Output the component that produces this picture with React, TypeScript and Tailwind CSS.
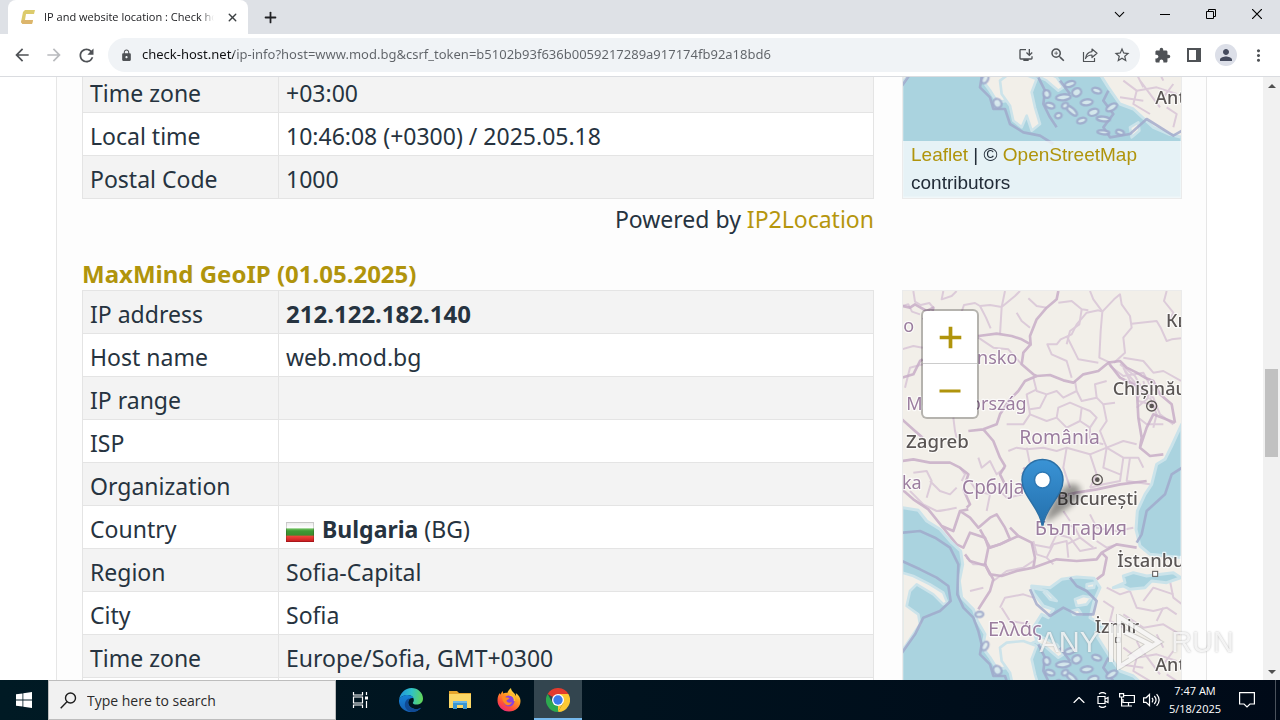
import type { ReactNode } from "react";
import { ChevronDown, ChevronUp, Minus, Plus, X } from "lucide-react";
import {
  MdArrowBack,
  MdArrowForward,
  MdExtension,
  MdLock,
  MdMoreVert,
  MdOutlineInstallDesktop,
  MdPerson,
  MdRefresh,
  MdStarBorder,
  MdZoomIn,
} from "react-icons/md";

type Row = { label: string; value: ReactNode };

function Flag() {
  return (
    <svg viewBox="0 0 28 20" className="mr-2 inline-block h-5 w-7 align-[-4px]" role="img" aria-label="Bulgarian flag">
      <defs>
        <linearGradient id="flag-shade" x1="0" y1="0" x2="0" y2="1">
          <stop offset="0" stopColor="#e8e8e8" />
          <stop offset=".3" stopColor="#fff" />
          <stop offset=".34" stopColor="#6cbf5c" />
          <stop offset=".45" stopColor="#3f9a35" />
          <stop offset=".66" stopColor="#3c8c2e" />
          <stop offset=".7" stopColor="#f0483c" />
          <stop offset="1" stopColor="#c4161c" />
        </linearGradient>
      </defs>
      <rect width="28" height="20" fill="url(#flag-shade)" />
      <rect x=".5" y=".5" width="27" height="19" fill="none" stroke="#000" strokeOpacity=".15" />
    </svg>
  );
}

const ip2location: Row[] = [
  { label: "Time zone", value: "+03:00" },
  { label: "Local time", value: "10:46:08 (+0300) / 2025.05.18" },
  { label: "Postal Code", value: "1000" },
];

const maxmind: Row[] = [
  { label: "IP address", value: <strong className="text-[24px]">212.122.182.140</strong> },
  { label: "Host name", value: "web.mod.bg" },
  { label: "IP range", value: "" },
  { label: "ISP", value: "" },
  { label: "Organization", value: "" },
  {
    label: "Country",
    value: (
      <>
        <Flag />
        <strong>Bulgaria</strong> (BG)
      </>
    ),
  },
  { label: "Region", value: "Sofia-Capital" },
  { label: "City", value: "Sofia" },
  { label: "Time zone", value: "Europe/Sofia, GMT+0300" },
  { label: "Local time", value: "" },
  { label: "Postal Code", value: "" },
];

function InfoTable({ rows }: { rows: Row[] }) {
  return (
    <table className="w-full table-fixed border-collapse border border-[#e4e4e4]">
      <colgroup>
        <col className="w-49" />
        <col />
      </colgroup>
      <tbody>
        {rows.map((row) => (
          <tr key={row.label} className="h-[43px] odd:bg-[#f3f3f3] even:bg-white">
            <th scope="row" className="border border-[#e4e4e4] px-[7px] pt-1 text-left font-normal">
              {row.label}
            </th>
            <td className="border border-[#e4e4e4] px-[7px] pt-1">{row.value}</td>
          </tr>
        ))}
      </tbody>
    </table>
  );
}

const provinceLines = [
  "M70 30 75 62 92 72 118 66 130 80 M36 75 55 70 66 92 90 100 M160 30 155 55 185 45 200 30",
  "M215 92 222 72 255 66 270 75 300 72 335 78 M270 75 288 110 302 142 M335 78 330 160 M345 30 335 78 375 45 390 30",
  "M415 52 440 75 470 80 M420 140 395 120 380 95 M505 65 545 60 575 85 595 88 M575 85 568 130 540 150 530 190 M600 30 610 55 637 92",
  "M637 92 625 88 590 95 560 130 545 160 512 175 500 190 472 190 485 220 530 240 545 290 M637 92 632 150 628 230 660 245",
  "M637 92 672 55 690 40 695 70 720 105 725 140 700 170 705 215 672 245 M725 128 800 120 812 140 830 180 845 175 873 172",
  "M830 30 822 60 850 95 835 125 M530 165 555 215 565 235 625 245 M700 230 760 240 790 275 820 270 873 300",
  "M265 170 310 200 355 205 395 250 M36 205 70 195 98 200 M45 320 60 260 98 250 M190 410 195 450 200 470",
  "M430 290 440 330 470 340 500 330 520 350 560 330 555 300 M470 340 450 380 420 385 M560 330 575 360 620 350 640 370 675 365",
  "M440 325 410 340 420 400 470 420 500 410 505 380 540 365 575 380 570 420 530 440 500 410 M575 380 600 390 620 410 600 440 570 420",
  "M620 350 615 310 650 300 M640 370 650 420 630 450 650 500 700 480 740 490 M600 440 600 480 640 490 M420 400 400 430 350 430",
  "M410 500 420 550 395 580 M355 510 380 500 410 505 460 500 500 510 530 500 600 520 620 580 600 620 M530 500 520 560 540 620",
  "M600 520 650 500 700 530 690 600 640 610 600 620 M650 500 640 560 690 580 M700 530 745 530 760 560 M720 530 710 600 780 610",
  "M700 260 720 300 760 320 745 350 M660 255 700 285 760 275 790 330 M780 350 800 400 790 440 M745 410 770 430 820 430",
  "M690 250 735 285 760 330 790 350 810 400 850 430 M705 270 740 310 745 360 780 370 800 380 M760 300 775 350 740 380",
  "M265 530 275 560 300 540 320 580 345 560 M215 600 225 580 210 560 M70 575 110 570 125 600 110 650 M120 600 150 630 180 640 200 620",
  "M240 600 260 630 300 640 320 620 350 650 400 640 M60 630 100 670 140 690 180 685 M150 690 200 680 M300 640 290 690",
  "M430 780 440 820 470 830 490 790 530 780 535 830 M530 790 570 770 610 800 M570 770 555 740 530 730 M620 780 650 800 680 790",
  "M425 790 480 800 500 760 540 770 570 810 620 800 M470 830 490 850 M600 700 620 740 680 750 730 740 M520 690 540 720",
  "M230 830 250 850 290 850 M240 930 280 920 M310 900 350 870 400 860 430 840 M330 980 345 950 400 940 430 950 M335 980 360 1020 420 1030",
  "M650 920 690 940 720 930 M720 930 740 980 790 990 830 980 860 1000 M760 960 790 920 850 940 M700 1000 760 1040 820 1030 870 1060",
  "M700 1100 740 1130 800 1120 860 1140 M740 1080 760 1120 M800 1060 820 1100 M690 1150 760 1160 M750 1100 810 1180 M820 1150 850 1110",
  "M640 960 670 980 660 1020 700 1040 M840 900 850 950 876 970 M820 980 800 1020 M740 1130 730 1170 780 1200 M830 1180 860 1200 850 1240",
];

const countryLines = [
  "M36 75 60 80 75 70 110 90 130 80 125 105 98 115 M36 290 70 280 90 240 98 235",
  "M505 30 500 55 470 80 440 115 420 165 422 190 395 175 365 165 320 158 265 165",
  "M422 190 400 215 395 250 430 280 440 285 480 282 520 298 550 305 580 280 625 270 655 245 690 240 710 260 740 275 765 290 790 300 810 340 845 370 855 425",
  "M440 285 405 300 385 330 360 355 330 400 320 430 280 445 235 450 M280 445 310 480 330 530 345 555 330 580 345 610",
  "M36 415 75 450 98 470 M36 540 70 535 120 545 180 545 210 560 235 580 220 625 240 670 230 680",
  "M400 560 430 590 440 630 500 650 560 635 620 625 690 610 770 600",
  "M655 245 690 290 740 315 745 410 755 470 750 500 780 525 820 520 M750 500 770 440 790 400 855 425",
  "M36 625 70 655 115 685 155 735 190 750 210 690 235 685 M210 690 240 710 265 740 300 710 320 700 345 740 360 775 330 790 300 800 270 745",
  "M155 735 200 790 220 800 240 755 285 770 295 800 285 850 310 895 300 930 265 985 M225 820 240 840 290 855",
  "M295 800 330 790 385 765 425 785 435 830 430 860 380 870 335 885 300 880 285 850 M360 740 385 765",
  "M430 860 500 835 560 840 620 835 635 815 650 830 640 880 620 895 M635 815 680 790 740 800",
];

const seaShapes = [
  "M36 680 85 688 110 720 150 745 185 785 212 810 218 850 208 900 215 950 250 985 262 1020 285 1060 278 1100 300 1130 322 1165 350 1160 375 1110 440 1080 430 1040 455 1000 475 1010 490 985 460 975 430 935 425 915 480 920 515 895 560 888 612 892 630 920 612 960 600 1010 640 1035 620 1065 655 1120 690 1170 730 1185 790 1240 835 1260 875 1270 875 1452 36 1452Z",
  "M875 430 845 495 825 535 800 550 785 610 765 640 742 690 738 745 750 795 780 820 830 825 875 830Z",
  "M670 920 705 905 700 885 730 875 770 885 850 875 872 890 830 905 785 900 765 920 720 925 700 915Z",
];

const landShapes = [
  "M36 875 70 885 120 910 160 935 172 965 160 970 130 940 80 910 60 930 50 975 85 1000 90 1030 60 1075 36 1110Z",
  "M330 1100 350 1085 400 1080 440 1095 425 1135 435 1180 450 1230 425 1250 410 1205 395 1240 370 1220 360 1175 335 1140Z",
  "M440 1060 500 1090 520 1120 505 1130 470 1100 440 1085Z",
  "M425 920 470 930 500 960 480 955 455 925Z",
  "M555 955 580 945 605 950 590 970 560 975Z",
  "M590 910 615 905 612 920 590 922Z",
  "M545 990 565 985 575 1000 550 1002Z",
  "M720 1240 745 1225 748 1250 725 1270Z",
];

const islands = [
  [520, 1150, 22, 9], [560, 1135, 14, 12], [590, 1165, 18, 9], [545, 1190, 20, 8], [610, 1195, 16, 10],
  [480, 1175, 14, 8], [640, 1215, 20, 7], [575, 1220, 14, 8], [665, 1180, 18, 9], [505, 1205, 10, 8],
  [540, 1110, 16, 8], [620, 1130, 14, 8], [470, 1140, 10, 12], [640, 1255, 18, 6], [690, 1255, 12, 7],
  [322, 1168, 12, 14], [268, 1000, 12, 8], [285, 1095, 9, 14], [525, 1175, 10, 8],
];

const mapLabels = [
  { x: 40, y: 152, text: "o", size: 54, country: true },
  { x: 382, y: 250, text: "Slovensko", size: 54, country: true, end: true },
  { x: 410, y: 386, text: "Magyarország", size: 54, country: true, end: true },
  { x: 388, y: 490, text: "România", size: 58, country: true },
  { x: 36, y: 624, text: "ka", size: 54, country: true },
  { x: 216, y: 640, text: "Србија", size: 57, country: true },
  { x: 434, y: 762, text: "България", size: 60, country: true },
  { x: 294, y: 1066, text: "Ελλάς", size: 60, country: true },
  { x: 828, y: 138, text: "Київ", size: 54 },
  { x: 668, y: 343, text: "Chișinău", size: 54 },
  { x: 48, y: 502, text: "Zagreb", size: 56 },
  { x: 500, y: 673, text: "București", size: 54 },
  { x: 682, y: 857, text: "İstanbul", size: 55 },
  { x: 614, y: 1057, text: "İzmir", size: 54 },
  { x: 796, y: 1171, text: "Antalya", size: 54 },
];

function BalkanMap() {
  return (
    <svg viewBox="36 30 840 1422" className="block h-[474px] w-full shrink-0" preserveAspectRatio="xMidYMid slice" role="img" aria-label="Map of the Balkans">
      <rect x="0" y="0" width="960" height="1500" fill="#f2efe9" />
      <g fill="none" stroke="#dccbd9" strokeWidth="6" strokeLinejoin="round">
        {provinceLines.map((d) => (
          <path key={d} d={d} />
        ))}
      </g>
      <g fill="none" stroke="#c8aec8" strokeWidth="8" strokeLinejoin="round" opacity=".85">
        {countryLines.map((d) => (
          <path key={d} d={d} />
        ))}
      </g>
      <g fill="#aad3df" stroke="#cbe3ea" strokeWidth="9" strokeLinejoin="round">
        {seaShapes.map((d) => (
          <path key={d} d={d} />
        ))}
      </g>
      <g fill="#f2efe9" stroke="#cce3ea" strokeWidth="8" strokeLinejoin="round">
        {landShapes.map((d) => (
          <path key={d} d={d} />
        ))}
      </g>
      <g fill="none" stroke="#a0a8cb" strokeWidth="8" strokeLinejoin="round" opacity=".8">
        <path d="M36 755 90 750 135 770 180 800 205 850 202 940 220 980 250 1010 265 1050 275 1090 270 1120 300 1150 310 1185 345 1185 360 1230 400 1255 450 1265 490 1290" />
        <path d="M36 840 90 865 140 890 175 915 182 960 150 990 100 1010 75 1060 36 1115" />
        <path d="M420 925 440 970 480 1005 520 980 560 1000 610 1000 620 960 590 930 560 915 540 890" />
        <path d="M876 560 845 580 825 640 770 690 755 760 740 785" />
        <path d="M445 1090 465 1130 460 1170 480 1210 500 1240 M510 1100 540 1140 M655 1130 640 1160 670 1200 640 1240 660 1270 720 1260 770 1215 850 1265 876 1250" />
      </g>
      <g fill="#dcebef" stroke="#9fa9cb" strokeWidth="7" opacity=".85">
        {islands.map(([cx, cy, rx, ry]) => (
          <ellipse key={`${cx}-${cy}`} cx={cx} cy={cy} rx={rx} ry={ry} transform={`rotate(${(cx % 7) * 12 - 30} ${cx} ${cy})`} />
        ))}
      </g>
      <g fontFamily="'Noto Sans', sans-serif" stroke="#fff" strokeOpacity=".7" strokeWidth="7" strokeLinejoin="round" paintOrder="stroke">
        {mapLabels.map((label) => (
          <text
            key={label.text}
            x={label.x}
            y={label.y}
            textAnchor={label.end ? "end" : "start"}
            fontSize={label.size}
            fontWeight={label.country ? 400 : 500}
            fill={label.country ? "#9b7d9f" : "#5b5655"}
          >
            {label.text}
          </text>
        ))}
      </g>
      <g fill="none" stroke="#5a5554" strokeWidth="4">
        <circle cx="785" cy="375" r="15" />
        <circle cx="622" cy="596" r="15" />
        <circle cx="785" cy="375" r="5" fill="#5a5554" />
        <circle cx="622" cy="596" r="5" fill="#5a5554" />
        <rect x="788" y="871" width="15" height="15" fill="#fff" strokeWidth="3" />
        <rect x="677" y="1070" width="14" height="14" fill="#fff" strokeWidth="3" />
      </g>
    </svg>
  );
}

function Marker() {
  return (
    <svg viewBox="0 0 72 70" className="absolute top-[167px] left-[118px] h-[70px] w-[72px]" role="img" aria-label="Server location">
      <defs>
        <linearGradient id="pin-fill" x1="0" y1="0" x2="0" y2="1">
          <stop offset="0" stopColor="#3a93d5" />
          <stop offset="1" stopColor="#2470ad" />
        </linearGradient>
        <filter id="pin-shadow">
          <feGaussianBlur stdDeviation="3" />
        </filter>
      </defs>
      <path d="M23 66C28 50 34 34 47 27c10-4 16 4 10 13C50 50 34 58 23 66Z" fill="#000" opacity=".4" filter="url(#pin-shadow)" />
      <path d="M21 67C19 50 1 38 1 22a20.500 20.500 0 0 1 41 0c0 16-18 28-20 45Z" fill="url(#pin-fill)" stroke="#2b6fa5" strokeWidth="1.500" />
      <circle cx="21.500" cy="22" r="8" fill="#fff" stroke="#2d78b4" strokeWidth="1.500" />
    </svg>
  );
}

function TabStrip() {
  return (
    <header className="flex h-[34px] shrink-0 bg-[#dee1e6] pl-2 text-[#202124]">
      <div className="flex w-60 items-center rounded-t-lg bg-white pr-[6px] pl-3">
        <svg viewBox="0 0 16 16" className="mr-2 h-4 w-4 shrink-0" aria-hidden="true">
          <path d="M5 1h10l-1 4H6L5 11h8l-1 4H2.500L1 13 3 3Z" fill="#dccb6c" />
          <path d="M2 11h11l-1 4H2.500L1 13Z" fill="#dcb56c" />
        </svg>
        <span className="w-[170px] overflow-hidden text-[11px] whitespace-nowrap [mask-image:linear-gradient(to_right,black_92%,transparent)]">
          IP and website location : Check host
        </span>
        <button type="button" aria-label="Close tab" className="ml-2 flex h-5 w-5 items-center justify-center text-[#3c4043]">
          <X size={13} strokeWidth={2.5} />
        </button>
      </div>
      <button type="button" aria-label="New tab" className="ml-2 flex w-7 items-center justify-center">
        <Plus size={17} strokeWidth={2.5} />
      </button>
      <div className="ml-auto flex pb-[6px] text-black">
        <button type="button" aria-label="Search tabs" className="flex w-[46px] items-center justify-center">
          <ChevronDown size={17} strokeWidth={1.5} />
        </button>
        <button type="button" aria-label="Minimize" className="flex w-[46px] items-center justify-center">
          <svg viewBox="0 0 10 10" className="h-[10px] w-[10px]"><path d="M0 5.500h10" stroke="currentColor" /></svg>
        </button>
        <button type="button" aria-label="Restore" className="flex w-[46px] items-center justify-center">
          <svg viewBox="0 0 10 10" className="h-[10px] w-[10px]" fill="none" stroke="currentColor">
            <path d="M.5 2.500h7v7h-7zM2.500 2.500v-2h7v7h-2" />
          </svg>
        </button>
        <button type="button" aria-label="Close window" className="flex w-[46px] items-center justify-center">
          <svg viewBox="0 0 10 10" className="h-[10px] w-[10px]"><path d="M0 0l10 10M10 0 0 10" stroke="currentColor" strokeWidth="1.200" /></svg>
        </button>
      </div>
    </header>
  );
}

function ToolButton({ label, children }: { label: string; children: ReactNode }) {
  return (
    <button type="button" aria-label={label} className="flex h-8 w-8 shrink-0 items-center justify-center">
      {children}
    </button>
  );
}

function Toolbar() {
  return (
    <nav className="flex h-[43px] shrink-0 items-center border-b border-[#dadce0] bg-white px-[6px] text-[#4f5256]">
      <ToolButton label="Back"><MdArrowBack size={20} /></ToolButton>
      <ToolButton label="Forward"><MdArrowForward size={20} className="text-[#b9bbbe]" /></ToolButton>
      <ToolButton label="Reload"><MdRefresh size={21} /></ToolButton>
      <div className="mx-[6px] flex h-[34px] flex-1 items-center rounded-full bg-[#f0f3f6] pr-[2px] pl-3">
        <MdLock size={13} className="mr-[9px] shrink-0" />
        <input
          aria-label="Address"
          readOnly
          value="check-host.net/ip-info?host=www.mod.bg&csrf_token=b5102b93f636b0059217289a917174fb92a18bd6"
          className="min-w-0 flex-1 bg-linear-to-r from-[#111214] from-[92px] to-[#5f6368] to-[92px] bg-clip-text font-['Noto_Sans',sans-serif] text-[13px] text-transparent outline-none"
        />
        <ToolButton label="Install"><MdOutlineInstallDesktop size={16} /></ToolButton>
        <ToolButton label="Zoom"><MdZoomIn size={18} /></ToolButton>
        <ToolButton label="Share">
          <svg viewBox="0 0 16 16" className="h-4 w-4" fill="none" stroke="currentColor" strokeWidth="1.200" strokeLinejoin="round">
            <path d="M1.500 5v9.500h11V11M10 2l5 4.300-5 4.200V8C7 8 5 9 3.500 11.500 4 7.500 6.500 5 10 4.600Z" />
          </svg>
        </ToolButton>
        <ToolButton label="Bookmark"><MdStarBorder size={18} /></ToolButton>
      </div>
      <ToolButton label="Extensions"><MdExtension size={17} /></ToolButton>
      <ToolButton label="Side panel">
        <svg viewBox="0 0 14 14" className="h-[14px] w-[14px]" fill="currentColor">
          <path fillRule="evenodd" d="M0 0h14v14H0ZM2 2v10h7V2Z" />
        </svg>
      </ToolButton>
      <ToolButton label="Profile">
        <span className="flex h-[22px] w-[22px] items-center justify-center rounded-full bg-[#dcdfe8] text-[#454b5e]">
          <MdPerson size={18} />
        </span>
      </ToolButton>
      <ToolButton label="Menu"><MdMoreVert size={19} /></ToolButton>
    </nav>
  );
}

function Content() {
  return (
    <main className="min-w-0 flex-1 overflow-hidden bg-white px-14 font-['Noto_Sans',sans-serif] text-[23px] leading-[32px] text-[#263340]">
      <div className="-mt-2 border-x border-[#e6e6e6] bg-[#fdfdfd] pr-6 pl-[25px]">
        <section className="flex gap-7">
          <div className="min-w-0 flex-1">
            <InfoTable rows={ip2location} />
          </div>
          <div className="relative w-[280px] shrink-0 overflow-hidden border border-[#ebebeb]">
            <div className="absolute inset-x-0 bottom-0">
              <BalkanMap />
            </div>
            <p className="absolute inset-x-0 bottom-0 bg-white/70 px-2 pb-px font-['Liberation_Sans',sans-serif] text-[19px] leading-[28px] text-[#222c38]">
              <a href="#leaflet" className="text-[#b0940c]">Leaflet</a> | © <a href="#osm" className="text-[#b0940c]">OpenStreetMap</a> contributors
            </p>
          </div>
        </section>
        <section className="flex gap-7">
          <div className="min-w-0 flex-1">
            <p className="pt-1 text-right">
              Powered by <a href="#ip2location" className="text-[#b5960d]">IP2Location</a>
            </p>
            <h2 className="pt-[23px] text-[24px] leading-[32px] font-bold text-[#b0940c]">MaxMind GeoIP (01.05.2025)</h2>
            <InfoTable rows={maxmind} />
          </div>
          <div className="w-[280px] shrink-0 pt-[91px]">
            <div className="relative h-[474px] overflow-hidden border border-[#ebebeb]">
              <BalkanMap />
              <Marker />
              <div className="absolute top-[18px] left-[18px] flex w-[58px] flex-col overflow-hidden rounded-md border-2 border-black/25 bg-white bg-clip-padding text-[#b0940c]">
                <button type="button" aria-label="Zoom in" className="flex h-[53px] items-center justify-center border-b border-[#ccc]">
                  <Plus size={37} strokeWidth={2.4} strokeLinecap="butt" />
                </button>
                <button type="button" aria-label="Zoom out" className="flex h-[53px] items-center justify-center">
                  <Minus size={36} strokeWidth={2} strokeLinecap="butt" />
                </button>
              </div>
            </div>
          </div>
        </section>
      </div>
    </main>
  );
}

function Scrollbar() {
  return (
    <div className="flex w-[17px] shrink-0 flex-col items-center bg-[#f1f1f1] text-[#505050]">
      <button type="button" aria-label="Scroll up" className="flex h-[17px] items-center">
        <svg viewBox="0 0 8 4" className="h-1 w-2" fill="currentColor"><path d="M0 4 4 0l4 4Z" /></svg>
      </button>
      <span className="grow-[275]" />
      <span className="h-[88px] w-[13px] bg-[#c1c1c1]" />
      <span className="grow-[206]" />
      <button type="button" aria-label="Scroll down" className="flex h-[17px] items-center">
        <svg viewBox="0 0 8 4" className="h-1 w-2" fill="currentColor"><path d="M0 0h8L4 4Z" /></svg>
      </button>
    </div>
  );
}

function Watermark() {
  return (
    <div aria-hidden="true" className="pointer-events-none absolute right-[46px] bottom-[10px] flex items-center gap-[6px] font-['Liberation_Sans',sans-serif] text-[29px] leading-[54px] text-white/80 [text-shadow:0_0_2px_rgba(90,90,90,0.45)]">
      <span>ANY</span>
      <svg viewBox="0 0 60 56" className="h-14 w-[60px]" fill="none">
        <path d="M6 10V48M14 3V53L54 28ZM20 18l24 12-20 14" stroke="#999" strokeOpacity=".35" strokeWidth="6" />
        <path d="M6 10V48M14 3V53L54 28ZM20 18l24 12-20 14" stroke="#fff" strokeOpacity=".8" strokeWidth="4" />
      </svg>
      <span>RUN</span>
    </div>
  );
}

function EdgeIcon() {
  return (
    <svg viewBox="0 0 24 24" className="h-6 w-6">
      <defs>
        <linearGradient id="edge-top" x1="0" y1=".4" x2="1" y2=".5">
          <stop offset="0" stopColor="#1f93dd" />
          <stop offset=".5" stopColor="#2fc2c8" />
          <stop offset="1" stopColor="#62d657" />
        </linearGradient>
        <linearGradient id="edge-low" x1="0" y1="0" x2="0" y2="1">
          <stop offset="0" stopColor="#1582d6" />
          <stop offset="1" stopColor="#1560b4" />
        </linearGradient>
      </defs>
      <path d="M0 12C1 5 6 0 12.500 0 19 0 24 5 24 10.500c0 4-3 6-6.500 6-2.500 0-3.700-.8-3.700-1.600 0-.7 1-1.100 1-3C14.800 9 12 7 8.500 7 4 7 1 9.500 0 12Z" fill="url(#edge-top)" />
      <path d="M0 12C1 9 4.500 7 8.500 7c3 0 5.200 1.300 6 3-3-.6-5.300 1.500-5.300 4.500 0 4 4 6.500 8 6.500 1.800 0 3.500-.4 5-1.300C20 22.500 16.500 24 12.500 24 5 24-.5 18.500 0 12Z" fill="url(#edge-low)" />
      <path d="M9.200 14.500c0 4 4 6.500 8 6.500 1.800 0 3.500-.4 5-1.300C20 22.500 16.500 24 12.500 24 8 23 5 19.500 6 15c.6-2.500 2.500-4.500 5-5-1 1-1.800 2.700-1.800 4.500Z" fill="#104a94" />
    </svg>
  );
}

function ExplorerIcon() {
  return (
    <svg viewBox="0 0 22 20" className="h-5 w-[22px]">
      <path d="M0 1h8l2 2h12v3H0Z" fill="#e5a52c" />
      <path d="M0 4h22v14H0Z" fill="#fbd766" />
      <path d="M4 11h14v8h-4v-4H8v4H4Z" fill="#3a96d2" />
      <path d="M4 11h14v2H4Z" fill="#6cb8e8" />
    </svg>
  );
}

function FirefoxIcon() {
  return (
    <svg viewBox="0 0 24 24" className="h-6 w-6">
      <defs>
        <linearGradient id="fox" x1=".8" y1="0" x2=".2" y2="1">
          <stop offset="0" stopColor="#fff14a" />
          <stop offset=".4" stopColor="#ff9a22" />
          <stop offset=".75" stopColor="#ff4a3d" />
          <stop offset="1" stopColor="#e6238b" />
        </linearGradient>
      </defs>
      <path d="M14 0c0 2 1 3 3 5 1 1 1.500 2 1.800 3 .3-1 .2-2-.1-3C22 7 23.500 10 23.500 13 23.500 19 18.500 23.500 12 23.500S.5 18.500.5 12.500C.5 9 1.500 6.500 3 5l.3 1.800L5.500 3l.8 2.500c1.200-.7 2.700-1 4-.5C11 3 12.500 1 14 0Z" fill="url(#fox)" />
      <circle cx="12" cy="13" r="5.500" fill="#8a42dd" />
      <path d="M5 8c2 0 3 .8 4 1.500 1.500-.3 3 .2 3.500 1-.8 1-2.500 1-3 2 0 2 3 3 5.500 1.500C14 17 11 18 8.500 16.500 6.500 15 5 12 5 8Z" fill="#ff8a1f" />
      <path d="M12.500 7c3 0 5.500 2.500 5 6" fill="none" stroke="#ffc22e" strokeWidth="1.500" />
    </svg>
  );
}

function ChromeIcon() {
  return (
    <svg viewBox="0 0 24 24" className="h-6 w-6">
      <path d="M12 12 1.600 6A12 12 0 0 1 22.400 6Z" fill="#e33b2e" />
      <path d="M12 6h10.400A12 12 0 0 1 12 24l5.200-9Z" fill="#fcc934" />
      <path d="M1.600 6 6.800 15 12 18l2.500.500L12 24A12 12 0 0 1 1.600 6Z" fill="#2da94f" />
      <path d="M12 18 17.200 15 12 24Z" fill="#fcc934" />
      <circle cx="12" cy="12" r="6" fill="#fff" />
      <circle cx="12" cy="12" r="4.700" fill="#3a7bea" />
    </svg>
  );
}

function TaskButton({ label, active, children }: { label: string; active?: boolean; children: ReactNode }) {
  return (
    <button
      type="button"
      aria-label={label}
      className={
        active
          ? "flex h-10 w-12 items-center justify-center border-b-2 border-[#76b9ed] bg-[#33454f] pt-[2px]"
          : "flex h-10 w-12 items-center justify-center"
      }
    >
      {children}
    </button>
  );
}

function Taskbar() {
  return (
    <footer className="flex h-10 shrink-0 bg-linear-to-r from-[#001a24] to-[#000a18] text-white">
      <TaskButton label="Start">
        <svg viewBox="0 0 16 16" className="h-4 w-4" fill="currentColor">
          <path d="M0 2.300 6.500 1.400v6.200H0ZM7.300 1.300 16 0v7.600H7.300ZM0 8.400h6.500v6.200L0 13.700ZM7.300 8.400H16V16l-8.700-1.300Z" />
        </svg>
      </TaskButton>
      <label className="flex w-72 items-center gap-[10px] border border-[#bdbdbd] bg-[#f1f1f1] pl-[11px] text-[#1d1d1d]">
        <svg viewBox="0 0 17 17" className="h-[17px] w-[17px] shrink-0" fill="none" stroke="currentColor" strokeWidth="1.400">
          <circle cx="10.500" cy="6" r="5" />
          <path d="M7 9.700.7 16.200" />
        </svg>
        <input type="search" aria-label="Search" placeholder="Type here to search" className="min-w-0 flex-1 text-[14px] outline-none placeholder:text-[#2b2b2b]" />
      </label>
      <TaskButton label="Task view">
        <svg viewBox="0 0 17 16" className="h-4 w-[17px]" fill="none" stroke="currentColor" strokeWidth="1.200">
          <path d="M1.500 0v3h9V0M1.500 16v-3h9v3M1.500 5h9v6h-9zM14.500 0v3M14.500 9v7" />
          <path d="M13 4.500h3v3h-3z" fill="currentColor" stroke="none" />
        </svg>
      </TaskButton>
      <div className="flex gap-px pl-[3px]">
        <TaskButton label="Microsoft Edge"><EdgeIcon /></TaskButton>
        <TaskButton label="File Explorer"><ExplorerIcon /></TaskButton>
        <TaskButton label="Firefox"><FirefoxIcon /></TaskButton>
        <TaskButton label="Google Chrome" active><ChromeIcon /></TaskButton>
      </div>
      <div className="ml-auto flex items-center pr-1">
        <button type="button" aria-label="Show hidden icons" className="flex w-6 justify-center">
          <ChevronUp size={20} strokeWidth={1.4} />
        </button>
        <button type="button" aria-label="Meet now" className="flex w-6 justify-center">
          <svg viewBox="0 0 12 16" className="h-4 w-3" fill="none" stroke="currentColor" strokeWidth="1.200">
            <path d="M2 2C4 .3 7 .3 9 2M2 14c2 1.700 5 1.700 7 0M1 4.500h7v7H1zM8 7l3-1.500v5L8 9" />
          </svg>
        </button>
        <button type="button" aria-label="Network" className="flex w-6 justify-center">
          <svg viewBox="0 0 16 14" className="h-[14px] w-4" fill="none" stroke="currentColor" strokeWidth="1.200">
            <path d="M5 2.500h10.400v7H4V6M.6.600h4V4h-4zM2.600 4v9H13M9.500 9.500V13" />
          </svg>
        </button>
        <button type="button" aria-label="Volume" className="flex w-6 justify-center">
          <svg viewBox="0 0 17 14" className="h-[14px] w-[17px]" fill="none" stroke="currentColor" strokeWidth="1.200">
            <path d="M.6 4.800h2.500L6.500 1.500v11L3.100 9.300H.6ZM9 4.800c1.200 1.500 1.200 3 0 4.500M11.300 3c2.200 2.500 2.200 5.500 0 8M13.600 1.200c3.200 3.700 3.200 8 0 11.600" />
          </svg>
        </button>
        <time className="w-16 text-center text-[11px] leading-[18px]">
          7:47 AM
          <br />
          5/18/2025
        </time>
        <button type="button" aria-label="Notifications" className="flex w-10 justify-center">
          <svg viewBox="0 0 16 16" className="h-4 w-4" fill="none" stroke="currentColor" strokeWidth="1.200">
            <path d="M.6.600h14.800v11.400H11L8 15l-3-3H.6Z" />
          </svg>
        </button>
        <span className="ml-2 h-10 w-px bg-[#4a525c]" />
      </div>
    </footer>
  );
}

export default function App() {
  return (
    <div className="flex h-screen flex-col overflow-hidden font-['Open_Sans','Noto_Sans',sans-serif]">
      <TabStrip />
      <Toolbar />
      <div className="relative flex min-h-0 flex-1">
        <Content />
        <Scrollbar />
        <Watermark />
      </div>
      <Taskbar />
    </div>
  );
}
